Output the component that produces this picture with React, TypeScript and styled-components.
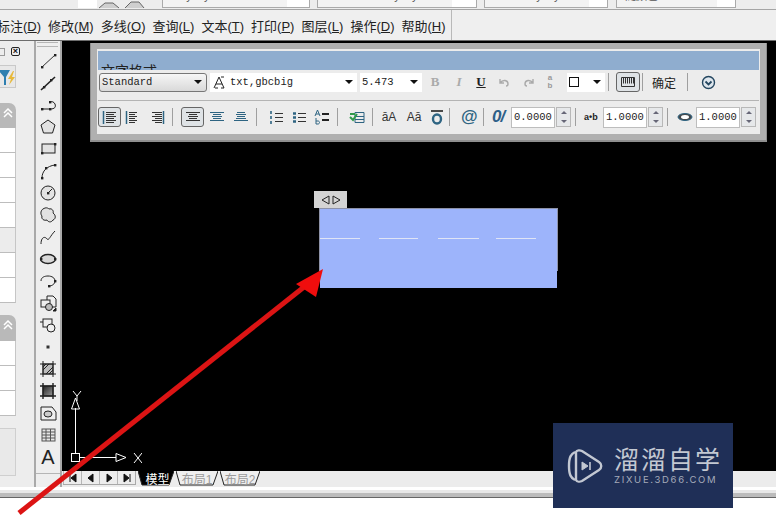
import React from "react";
import styled, { createGlobalStyle } from "styled-components";

const GlobalStyle = createGlobalStyle`
  html, body {
    margin: 0;
    padding: 0;
    background: #fff;
  }
  * {
    box-sizing: border-box;
  }
`;

const Root = styled.div`
  position: relative;
  width: 776px;
  height: 522px;
  overflow: hidden;
  display: flex;
  flex-direction: column;
  background: #fff;
  font-family: "Liberation Sans", "Noto Sans CJK SC", sans-serif;
`;

// top strip, only the bottom of the combos is visible
const TopStrip = styled.div`
  height: 10px;
  flex: none;
  display: flex;
  align-items: flex-start;
  background: #ededed;
  border-bottom: 1px solid #a5a5a5;
`;

const TopBlank = styled.div`
  width: 19px;
  height: 8px;
  flex: none;
  margin-left: 78px;
  background: #fff;
`;

const TopCombo = styled.div<{ $w: number; $ml: number; $pl: number }>`
  width: ${(p) => p.$w}px;
  height: 8px;
  margin-left: ${(p) => p.$ml}px;
  padding-left: ${(p) => p.$pl}px;
  padding-bottom: 5px;
  display: flex;
  align-items: flex-end;
  overflow: hidden;
  background: linear-gradient(90deg, #f3f3f3 85%, #fff 85%);
  border: 1px solid #aaa;
  border-top: none;
  font-size: 11px;
  line-height: 12px;
  color: #555;
`;

const IsoIcons = styled.svg`
  flex: none;
`;

const MenuBar = styled.div`
  height: 31px;
  flex: none;
  display: flex;
  align-items: center;
  background: #efefef;
  border-bottom: 1px solid #6d6d6d;
`;

const MenuList = styled.div`
  width: 452px;
  height: 100%;
  display: flex;
  align-items: center;
  gap: 7px;
  border-right: 1px solid #b9b9b9;
  overflow: hidden;
`;

const MenuItem = styled.span`
  flex: none;
  font-size: 13px;
  color: #222;
  white-space: nowrap;
  &:first-child {
    margin-left: -3px;
  }
  u {
    text-underline-offset: 1px;
  }
`;

const Main = styled.div`
  height: 446px;
  flex: none;
  display: flex;
`;

const Palette = styled.div`
  width: 36px;
  flex: none;
  padding-top: 6px;
  background: #ededed;
  border-right: 2px solid #a9a9a9;
`;

const CloseRow = styled.div`
  width: 20px;
  height: 10px;
  display: flex;
  justify-content: space-between;
`;

const MinimizeBox = styled.div`
  width: 5px;
  height: 8px;
  margin-top: 1px;
  border: 1px solid #9a9a9a;
  border-left: none;
`;

const CloseBox = styled.div`
  width: 9px;
  height: 9px;
  display: flex;
  align-items: center;
  justify-content: center;
  border: 1px solid #222;
  border-radius: 2px;
  font-size: 9px;
  font-weight: 700;
  line-height: 7px;
  color: #111;
`;

const FilterBox = styled.div`
  width: 16px;
  height: 23px;
  margin-top: 8px;
  overflow: hidden;
  display: flex;
  align-items: center;
  justify-content: flex-end;
  border: 1px solid #c9c9c9;
  border-left: none;
  background: #e8e8e8;
`;

const PanelHeader = styled.div<{ $mt: number; $h: number }>`
  width: 16px;
  height: ${(p) => p.$h}px;
  margin-top: ${(p) => p.$mt}px;
  display: flex;
  align-items: flex-start;
  justify-content: center;
  padding-top: 5px;
  background: #b9b9b9;
  border-top-right-radius: 7px;
`;

const PanelRow = styled.div<{ $gray?: boolean; $h?: number }>`
  width: 16px;
  height: ${(p) => p.$h ?? 25}px;
  background: ${(p) => (p.$gray ? "#ececec" : "#fff")};
  border-bottom: 1px solid #bdbdbd;
  border-right: 1px solid #c6c6c6;
`;

const PanelBox = styled.div`
  width: 16px;
  height: 48px;
  margin-top: 12px;
  background: #e9e9e9;
  border: 1px solid #cfcfcf;
  border-left: none;
`;

const DrawBar = styled.div`
  width: 26px;
  flex: none;
  display: flex;
  flex-direction: column;
  background: #eeeeee;
  border-right: 2px solid #a9a9a9;
`;

const Grip = styled.div`
  flex: none;
  margin: 1px 2px 3px 1px;
  border-top: 1px solid #b5b5b5;
  border-bottom: 1px solid #b5b5b5;
  height: 5px;
`;

const DrawCell = styled.div`
  height: 22px;
  flex: none;
  display: flex;
  align-items: center;
  justify-content: center;
  font-size: 20px;
  color: #222;
`;

const DrawBarEnd = styled.div`
  margin-top: 5px;
  border-top: 1px solid #b5b5b5;
`;

const Workspace = styled.div`
  flex: 1;
  display: flex;
  flex-direction: column;
  min-width: 0;
`;

const Canvas = styled.div`
  position: relative;
  flex: 1;
  background: #000;
`;

const TabBar = styled.div`
  height: 16px;
  flex: none;
  display: flex;
  align-items: flex-start;
  background: #ececec;
`;

const NavGroup = styled.div`
  display: flex;
  width: 73px;
  height: 14px;
  margin-left: 1px;
  border: 1px solid #a8a8a8;
  border-left: none;
  border-top: none;
`;

const NavButton = styled.div`
  flex: 1;
  display: flex;
  align-items: center;
  justify-content: center;
  border-left: 1px solid #b5b5b5;
`;

const Tab = styled.div<{ $w: number; $active?: boolean }>`
  position: relative;
  width: ${(p) => p.$w}px;
  height: 15px;
  flex: none;
  margin-left: 2px;
  padding-left: ${(p) => (p.$active ? 3 : 0)}px;
  display: flex;
  align-items: center;
  justify-content: center;
  font-size: 12px;
  color: ${(p) => (p.$active ? "#fff" : "#9a9a9a")};
  span {
    position: relative;
  }
  svg {
    position: absolute;
    inset: 0;
  }
`;

const Footer = styled.div`
  flex: 1;
  padding-top: 3px;
  background: #fff;
`;

const FooterBand = styled.div`
  height: 8px;
  background: linear-gradient(#e8e8e8 0 50%, #bcbcbc 50% 100%);
  border-bottom: 1px solid #666;
`;

// floating text format window
const FormatWindow = styled.div`
  position: absolute;
  left: 28px;
  top: 2px;
  width: 677px;
  height: 99px;
  padding: 8px 7px 0;
  background: #ececec;
  border: 1px solid #8f8f8f;
  border-width: 0 1px 2px 1px;
  box-shadow: inset 0 0 0 6px #b0b0b0;
`;

const TitleBar = styled.div`
  height: 19px;
  overflow: hidden;
  padding: 12px 0 0 3px;
  background: #8fadcf;
  font-size: 14px;
  line-height: 16px;
  color: #222;
`;

const FormatRow = styled.div<{ $h: number; $mt: number }>`
  display: flex;
  align-items: center;
  height: ${(p) => p.$h}px;
  margin-top: ${(p) => p.$mt}px;
`;

const RowRule = styled.div`
  height: 1px;
  margin-top: 8px;
  background: #b4b4b4;
`;

const Select = styled.div<{ $w: number; $ml: number; $gray?: boolean }>`
  width: ${(p) => p.$w}px;
  height: 19px;
  flex: none;
  margin-left: ${(p) => p.$ml}px;
  padding: 0 4px 0 2px;
  display: flex;
  align-items: center;
  justify-content: space-between;
  background: ${(p) => (p.$gray ? "linear-gradient(#f6f6f6, #d9d9d9)" : "#fff")};
  border: ${(p) => (p.$gray ? "1px solid #777" : "none")};
  border-radius: ${(p) => (p.$gray ? "3px" : "0")};
  font-family: "Liberation Mono", monospace;
  font-size: 10.5px;
  color: #222;
`;

const FontLabel = styled.span`
  display: flex;
  align-items: center;
  gap: 4px;
`;

const DownArrow = styled.i`
  width: 0;
  height: 0;
  flex: none;
  border-left: 4px solid transparent;
  border-right: 4px solid transparent;
  border-top: 4px solid #111;
`;

const StyleGlyph = styled.span<{ $ml: number; $w: number; $color: string; $serif?: boolean; $size?: number }>`
  width: ${(p) => p.$w}px;
  flex: none;
  margin-left: ${(p) => p.$ml}px;
  text-align: center;
  font-family: ${(p) => (p.$serif ? '"Liberation Serif", serif' : '"Liberation Sans", sans-serif')};
  font-size: ${(p) => p.$size ?? 13}px;
  line-height: ${(p) => (p.$size ? p.$size + "px" : "normal")};
  font-weight: 700;
  color: ${(p) => p.$color};
`;

const IconSlot = styled.span<{ $ml: number; $w: number }>`
  width: ${(p) => p.$w}px;
  height: 20px;
  flex: none;
  margin-left: ${(p) => p.$ml}px;
  display: flex;
  align-items: center;
  justify-content: center;
`;

const PressedButton = styled.span<{ $ml: number; $w: number }>`
  width: ${(p) => p.$w}px;
  height: 20px;
  flex: none;
  margin-left: ${(p) => p.$ml}px;
  display: flex;
  align-items: center;
  justify-content: center;
  background: #dfe3e6;
  border: 1px solid #666;
  border-radius: 3px;
`;

const Sep = styled.i<{ $ml: number }>`
  width: 1px;
  height: 18px;
  flex: none;
  margin-left: ${(p) => p.$ml}px;
  background: #9f9f9f;
`;

const OkLabel = styled.span`
  width: 24px;
  flex: none;
  margin-left: 9px;
  font-size: 12px;
  color: #222;
  white-space: nowrap;
`;

const AtSign = styled.span`
  width: 16px;
  flex: none;
  margin-left: 11px;
  font-size: 17px;
  font-weight: 700;
  text-align: center;
  color: #2e6482;
`;

const SmallCaps = styled.span<{ $ml: number }>`
  width: 16px;
  flex: none;
  margin-left: ${(p) => p.$ml}px;
  font-size: 12px;
  text-align: center;
  color: #333;
`;

const TrackLabel = styled.span`
  width: 17px;
  flex: none;
  margin-left: 8px;
  font-size: 9px;
  font-weight: 700;
  white-space: nowrap;
  color: #222;
`;

const ObliqueLabel = styled.span`
  width: 18px;
  flex: none;
  margin-left: 8px;
  font-size: 17px;
  font-weight: 700;
  font-style: italic;
  letter-spacing: -1px;
  white-space: nowrap;
  color: #2e5f88;
`;

const NumberInput = styled.div<{ $ml: number }>`
  width: 44px;
  height: 21px;
  flex: none;
  margin-left: ${(p) => p.$ml}px;
  padding-left: 2px;
  display: flex;
  align-items: center;
  background: #fff;
  border: 1px solid #bdbdbd;
  font-family: "Liberation Mono", monospace;
  font-size: 10.5px;
  color: #222;
`;

const Spinner = styled.div`
  width: 15px;
  height: 20px;
  flex: none;
  margin-left: 1px;
  display: flex;
  flex-direction: column;
  border: 1px solid #b8b8b8;
  background: #e6e8ea;
`;

const SpinPart = styled.div<{ $down?: boolean }>`
  flex: 1;
  display: flex;
  align-items: center;
  justify-content: center;
  &::after {
    content: "";
    border-left: 3px solid transparent;
    border-right: 3px solid transparent;
    ${(p) => (p.$down ? "border-top: 3px solid #667;" : "border-bottom: 3px solid #667;")}
  }
`;

// in-place text editor on the drawing
const RulerTab = styled.div`
  position: absolute;
  left: 252px;
  top: 150px;
  width: 33px;
  height: 17px;
  display: flex;
  align-items: center;
  justify-content: center;
  background: #d4d4d4;
`;

const TextFrame = styled.div`
  position: absolute;
  left: 257px;
  top: 167px;
  width: 239px;
  height: 63px;
  border: 1px solid #8d92a8;
  border-bottom: none;
`;

const TextFill = styled.div`
  position: absolute;
  left: 258px;
  top: 168px;
  width: 237px;
  height: 79px;
  display: flex;
  align-items: flex-start;
  padding-top: 29px;
  background: #9db4fb;
`;

const DashLine = styled.i<{ $w: number; $ml: number }>`
  width: ${(p) => p.$w}px;
  height: 1px;
  flex: none;
  margin-left: ${(p) => p.$ml}px;
  background: #dfe4f5;
`;

const UcsIcon = styled.svg`
  position: absolute;
  left: 4px;
  top: 345px;
`;

const Arrow = styled.svg`
  position: absolute;
  left: 0;
  top: 0;
`;

const Watermark = styled.div`
  position: absolute;
  left: 553px;
  top: 423px;
  width: 180px;
  height: 85px;
  display: flex;
  align-items: center;
  padding: 0 0 0 14px;
  background: #1f2f57;
`;

const WatermarkText = styled.div`
  margin-left: 11px;
  display: flex;
  flex-direction: column;
  color: #c3c8d2;
`;

const WatermarkTitle = styled.div`
  font-size: 25px;
  line-height: 27px;
  letter-spacing: 2px;
  white-space: nowrap;
`;

const WatermarkUrl = styled.div`
  font-family: "Inter", sans-serif;
  font-size: 9.5px;
  line-height: 11px;
  letter-spacing: 1.7px;
  white-space: nowrap;
  color: #a5abba;
`;

const Stroke: React.FC<React.SVGProps<SVGSVGElement> & { s?: number; vw?: number }> = ({
  s = 18,
  vw,
  children,
  ...rest
}) => (
  <svg
    width={vw ?? s}
    height={s}
    viewBox={`0 0 ${vw ?? s} ${s}`}
    fill="none"
    stroke="#222"
    strokeWidth={1}
    {...rest}
  >
    {children}
  </svg>
);

const dot = (x: number, y: number) => <rect x={x - 1} y={y - 1} width={2.4} height={2.4} fill="#222" stroke="none" />;

const drawIcons: React.ReactNode[] = [
  <Stroke key="line"><path d="M3 15 16 3" stroke="#333" />{dot(3, 15)}{dot(16, 3)}</Stroke>,
  <Stroke key="xline"><path d="M2 16 16 3" strokeWidth={1.6} />{dot(5, 13)}{dot(12, 6)}</Stroke>,
  <Stroke key="pline"><path d="M3 13h8c5 0 6-2 5-5-1-2-3-3-5-2" />{dot(3, 13)}{dot(11, 13)}{dot(11, 6)}</Stroke>,
  <Stroke key="polygon"><path d="M9 2 16 7 13.5 15H4.5L2 7Z" fill="#e2e2e2" /></Stroke>,
  <Stroke key="rect"><rect x="3" y="4" width="13" height="9" fill="#e2e2e2" />{dot(3, 13)}{dot(16, 4)}</Stroke>,
  <Stroke key="arc"><path d="M3 16C3 9 8 4 16 3" />{dot(3, 16)}{dot(7, 6)}{dot(16, 3)}</Stroke>,
  <Stroke key="circle"><circle cx="9" cy="9" r="7" fill="#e2e2e2" /><path d="M9 9 13 5" />{dot(9, 9)}</Stroke>,
  <Stroke key="cloud"><path d="M4 3C7 1 9 2 10 3 13 2 15 5 14 7 17 9 17 13 14 14 12 17 9 16 8 14 5 15 2 13 3 10 1 8 2 4 4 3Z" fill="#e2e2e2" /></Stroke>,
  <Stroke key="spline"><path d="M2 16C2 9 6 8 8 11 10 13 11 8 16 3" /></Stroke>,
  <Stroke key="ellipse"><ellipse cx="9" cy="9" rx="7.5" ry="4.5" fill="#d8d8d8" strokeWidth={1.4} />{dot(2, 9)}{dot(16, 9)}</Stroke>,
  <Stroke key="earc"><path d="M2 9C2 5 6 4 9 4 13 4 16 6 16 9 16 12 13 14 10 14" />{dot(16, 9)}{dot(10, 14)}</Stroke>,
  <Stroke key="insert"><path d="M8 2h6l3 3v8H8Z" fill="#eee" /><rect x="2" y="6" width="9" height="7" fill="#eee" /><circle cx="10" cy="13" r="3.5" fill="#bbb" /><path d="M14 17 17 14V17Z" fill="#111" /></Stroke>,
  <Stroke key="block"><rect x="4" y="3" width="9" height="8" fill="#eee" /><circle cx="12" cy="12" r="4" fill="#eee" /><path d="M1 6h3" /></Stroke>,
  <Stroke key="point"><rect x="7.5" y="7.5" width="3" height="3" fill="#333" stroke="none" /></Stroke>,
  <Stroke key="hatch"><rect x="4" y="4" width="10" height="10" fill="#bbb" /><path d="M1 4h16M1 14h16M4 1v16M14 1v16M4 10l6-6M7 14l7-7M4 7l3-3M10 14l4-4" /></Stroke>,
  <Stroke key="gradient"><defs><linearGradient id="grad" x1="0" y1="0" x2="1" y2="1"><stop offset="0" stopColor="#222" /><stop offset="1" stopColor="#999" /></linearGradient></defs><rect x="4" y="4" width="10" height="10" fill="url(#grad)" /><path d="M1 4h16M1 14h16M4 1v16M14 1v16" strokeWidth={1.4} /></Stroke>,
  <Stroke key="region"><path d="M2 3h11l4 5v8H2Z" fill="#eee" /><ellipse cx="9" cy="10" rx="4" ry="3" fill="#ccc" /></Stroke>,
  <Stroke key="table" stroke="#555"><rect x="3" y="3" width="13" height="12" fill="#e6e6e6" /><path d="M3 6h13M3 9h13M3 12h13M7 3v12M11.5 3v12" /></Stroke>,
];

const Align: React.FC<{ widths: number[]; rails?: boolean; right?: boolean; color?: string }> = ({
  widths,
  rails,
  right,
  color = "#333",
}) => (
  <Stroke s={16} stroke={color}>
    {rails && <path d="M1.5 2v13" stroke="#2e6482" strokeWidth={1.5} />}
    {right && <path d="M14.5 2v13" stroke="#2e6482" strokeWidth={1.5} />}
    {widths.map((w, i) => (
      <path key={i} d={`M${rails ? 4 : right ? 13 - w : Math.round((16 - w) / 2)} ${3.5 + i * 2}h${w}`} />
    ))}
  </Stroke>
);

const menus: [string, string][] = [
  ["标注", "D"],
  ["修改", "M"],
  ["多线", "O"],
  ["查询", "L"],
  ["文本", "T"],
  ["打印", "P"],
  ["图层", "L"],
  ["操作", "D"],
  ["帮助", "H"],
];

const palettePanelOne = [false, false, false, false, true, false, false];
const palettePanelTwo = [false, false, false];

const NumberField: React.FC<{ value: string; ml: number }> = ({ value, ml }) => (
  <>
    <NumberInput $ml={ml}>{value}</NumberInput>
    <Spinner>
      <SpinPart />
      <SpinPart $down />
    </Spinner>
  </>
);

export default function App() {
  return (
    <Root>
      <GlobalStyle />
      <TopStrip>
        <TopBlank />
        <IsoIcons width={48} height={9} viewBox="0 0 48 9" fill="none" stroke="#666">
          <path d="M2 8 8 3h8l6 5M28 8l6-6h8l5 6" fill="#cfcfcf" />
        </IsoIcons>
        <TopCombo $w={148} $ml={17} $pl={16}>ByLayer</TopCombo>
        <TopCombo $w={160} $ml={7} $pl={69}>ByLayer</TopCombo>
        <TopCombo $w={124} $ml={7} $pl={44}>ByLayer</TopCombo>
        <TopCombo $w={120} $ml={8} $pl={8}>随颜色</TopCombo>
      </TopStrip>

      <MenuBar>
        <MenuList>
          {menus.map(([label, key]) => (
            <MenuItem key={label + key}>
              {label}(<u>{key}</u>)
            </MenuItem>
          ))}
        </MenuList>
      </MenuBar>

      <Main>
        <Palette>
          <CloseRow>
            <MinimizeBox />
            <CloseBox>×</CloseBox>
          </CloseRow>
          <FilterBox>
            <Stroke s={18} vw={15} stroke="none">
              <path d="M-2 2h12L6 9v8H4V9Z" fill="#2e7fb0" />
              <path d="M13 3 8 11h3l-2 6 6-8h-3l2-6Z" fill="#e8b93a" />
            </Stroke>
          </FilterBox>
          <PanelHeader $mt={15} $h={25}>
            <Stroke s={10} vw={12} stroke="#fff" strokeWidth={1.5}>
              <path d="M2 5 6 1l4 4M2 9l4-4 4 4" />
            </Stroke>
          </PanelHeader>
          {palettePanelOne.map((gray, i) => (
            <PanelRow key={i} $gray={gray} />
          ))}
          <PanelHeader $mt={12} $h={26}>
            <Stroke s={10} vw={12} stroke="#fff" strokeWidth={1.5}>
              <path d="M2 5 6 1l4 4M2 9l4-4 4 4" />
            </Stroke>
          </PanelHeader>
          {palettePanelTwo.map((gray, i) => (
            <PanelRow key={i} $gray={gray} />
          ))}
          <PanelBox />
        </Palette>

        <DrawBar>
          <Grip />
          {drawIcons.map((icon, i) => (
            <DrawCell key={i}>{icon}</DrawCell>
          ))}
          <DrawCell>A</DrawCell>
          <DrawBarEnd />
        </DrawBar>

        <Workspace>
          <Canvas>
            <FormatWindow>
              <TitleBar>文字格式</TitleBar>
              <FormatRow $h={20} $mt={2}>
                <Select $w={108} $ml={1} $gray>
                  Standard
                  <DownArrow />
                </Select>
                <Select $w={147} $ml={3}>
                  <FontLabel>
                    <Stroke s={14} stroke="#222">
                      <path d="M2 13 7 2l5 11M4 9h6M9 2h3M3 13h3M9 13h3" />
                    </Stroke>
                    txt,gbcbig
                  </FontLabel>
                  <DownArrow />
                </Select>
                <Select $w={62} $ml={3}>
                  5.473
                  <DownArrow />
                </Select>
                <StyleGlyph $ml={6} $w={14} $color="#aaa" $serif>B</StyleGlyph>
                <StyleGlyph $ml={10} $w={14} $color="#aaa" $serif>
                  <i>I</i>
                </StyleGlyph>
                <StyleGlyph $ml={8} $w={14} $color="#222" $serif>
                  <u>U</u>
                </StyleGlyph>
                <IconSlot $ml={7} $w={18}>
                  <Stroke s={12} stroke="#aaa" strokeWidth={1.4}>
                    <path d="M2 3v4h4M2 7c3-4 8-3 8 1 0 1-1 2-2 2" />
                  </Stroke>
                </IconSlot>
                <IconSlot $ml={7} $w={18}>
                  <Stroke s={12} stroke="#aaa" strokeWidth={1.4}>
                    <path d="M10 3v4H6M10 7C7 3 2 4 2 8c0 1 1 2 2 2" />
                  </Stroke>
                </IconSlot>
                <StyleGlyph $ml={5} $w={14} $color="#999" $size={8}>
                  a
                  <br />b
                </StyleGlyph>
                <Select $w={38} $ml={10}>
                  <Stroke s={10} stroke="#111">
                    <rect x="0.5" y="0.5" width="9" height="9" />
                  </Stroke>
                  <DownArrow />
                </Select>
                <Sep $ml={3} />
                <PressedButton $ml={7} $w={24}>
                  <Stroke s={12} vw={16} stroke="#333">
                    <path d="M1.5 1.5h13v9h-13ZM3.5 1.5v6M5.5 1.5v6M7.5 1.5v6M9.5 1.5v6M11.5 1.5v6M13.5 1.5v6" />
                  </Stroke>
                </PressedButton>
                <Sep $ml={2} />
                <OkLabel>确定</OkLabel>
                <Sep $ml={11} />
                <IconSlot $ml={13} $w={15}>
                  <Stroke s={15} stroke="#24465f" strokeWidth={1.4}>
                    <circle cx="7.5" cy="7.5" r="6" fill="#dfe7ee" />
                    <path d="M4.5 6.5 7.5 9.5l3-3" strokeWidth={1.8} />
                  </Stroke>
                </IconSlot>
              </FormatRow>
              <RowRule />
              <FormatRow $h={22} $mt={5}>
                <PressedButton $ml={0} $w={23}>
                  <Align widths={[10, 8, 10, 8, 10, 8]} rails />
                </PressedButton>
                <IconSlot $ml={3} $w={18}>
                  <Align widths={[8, 6, 8, 6, 8, 6]} rails />
                </IconSlot>
                <IconSlot $ml={6} $w={18}>
                  <Align widths={[10, 7, 10, 7, 10, 7]} right />
                </IconSlot>
                <Sep $ml={6} />
                <PressedButton $ml={8} $w={23}>
                  <Align widths={[14, 8, 10, 8, 14]} />
                </PressedButton>
                <IconSlot $ml={4} $w={17}>
                  <Align widths={[14, 8, 10, 8, 14]} color="#2e6482" />
                </IconSlot>
                <IconSlot $ml={7} $w={17}>
                  <Align widths={[8, 10, 8, 10, 14]} color="#2e6482" />
                </IconSlot>
                <Sep $ml={7} />
                <IconSlot $ml={11} $w={16}>
                  <Stroke s={16} stroke="#333">
                    <path d="M7 4.5h8M7 8.5h8M7 12.5h8" />
                    <path d="M3 2v3M3 7v3M3 12v3" stroke="#2e6482" strokeWidth={1.6} />
                  </Stroke>
                </IconSlot>
                <IconSlot $ml={7} $w={16}>
                  <Stroke s={16} stroke="#333">
                    <path d="M7 4.5h8M7 8.5h8M7 12.5h8" />
                    <path d="M2 4.5h3M2 8.5h3M2 12.5h3" stroke="#2e6482" strokeWidth={2.4} />
                  </Stroke>
                </IconSlot>
                <IconSlot $ml={6} $w={18}>
                  <Stroke s={16} stroke="#222">
                    <path d="M8 5h7M8 11h7" strokeWidth={2} />
                    <path d="M1 7 3.5 1 6 7M2 5h3M2 9v6h2c2 0 2-3 0-3H2" stroke="#2e6482" />
                  </Stroke>
                </IconSlot>
                <Sep $ml={6} />
                <IconSlot $ml={10} $w={18}>
                  <Stroke s={16} stroke="#2e6482">
                    <path d="M6 3.5h9v10H6ZM6 7.5h9M6 10.5h9" />
                    <path d="M1 8l3 3 4-6M1 5h5" stroke="#2f9a4a" strokeWidth={2} />
                  </Stroke>
                </IconSlot>
                <Sep $ml={6} />
                <SmallCaps $ml={8}>āA</SmallCaps>
                <SmallCaps $ml={9}>Aā</SmallCaps>
                <IconSlot $ml={7} $w={16}>
                  <Stroke s={16} stroke="#2e6482">
                    <path d="M2 2h12" strokeWidth={1.6} stroke="#222" />
                    <ellipse cx="8" cy="10" rx="4" ry="4.5" strokeWidth={2.4} />
                  </Stroke>
                </IconSlot>
                <Sep $ml={4} />
                <AtSign>@</AtSign>
                <Sep $ml={6} />
                <ObliqueLabel>0/</ObliqueLabel>
                <NumberField value="0.0000" ml={1} />
                <Sep $ml={4} />
                <TrackLabel>a•b</TrackLabel>
                <NumberField value="1.0000" ml={2} />
                <Sep $ml={4} />
                <IconSlot $ml={9} $w={16}>
                  <Stroke s={12} vw={16}>
                    <ellipse cx="8" cy="6" rx="7" ry="3.5" fill="#44484c" stroke="#2e6482" />
                    <ellipse cx="8" cy="6" rx="4" ry="2" fill="#fff" stroke="none" />
                  </Stroke>
                </IconSlot>
                <NumberField value="1.0000" ml={3} />
              </FormatRow>
            </FormatWindow>

            <RulerTab>
              <Stroke s={12} vw={24} stroke="#222">
                <path d="M10 2 3 6l7 4ZM14 2l7 4-7 4Z" />
              </Stroke>
            </RulerTab>
            <TextFill>
              <DashLine $w={40} $ml={0} />
              <DashLine $w={39} $ml={19} />
              <DashLine $w={41} $ml={20} />
              <DashLine $w={40} $ml={17} />
            </TextFill>
            <TextFrame />

            <UcsIcon width={76} height={80} viewBox="0 0 76 80" fill="none" stroke="#fff">
              <rect x="5.5" y="67.5" width="8" height="8" />
              <path d="M9.5 67.5V22M13.5 71.5H50" />
              <path d="M9.5 12 13.5 23H5.5ZM60 71.5 50 67.5v8Z" />
              <path d="M7 5 11 10 15 5M11 10v5" />
              <path d="M68 67 76 77M76 67 68 77" />
            </UcsIcon>
          </Canvas>
          <TabBar>
            <NavGroup>
              <NavButton>
                <Stroke s={10} stroke="#111" fill="#111"><path d="M2 1v8M8 1 3 5l5 4Z" /></Stroke>
              </NavButton>
              <NavButton>
                <Stroke s={10} stroke="#111" fill="#111"><path d="M7 1 2 5l5 4Z" /></Stroke>
              </NavButton>
              <NavButton>
                <Stroke s={10} stroke="#111" fill="#111"><path d="M3 1l5 4-5 4Z" /></Stroke>
              </NavButton>
              <NavButton>
                <Stroke s={10} stroke="#111" fill="#111"><path d="M8 1v8M2 1l5 4-5 4Z" /></Stroke>
              </NavButton>
            </NavGroup>
            <Tab $w={36} $active>
              <Stroke s={15} vw={36} fill="#000" stroke="#222"><path d="M0 0 4 14H31L36 0" /></Stroke>
              <span>模型</span>
            </Tab>
            <Tab $w={42}>
              <Stroke s={15} vw={42} fill="#efefef" stroke="#222"><path d="M0 0 4 14H37L42 0" /></Stroke>
              <span>布局1</span>
            </Tab>
            <Tab $w={40}>
              <Stroke s={15} vw={40} fill="#efefef" stroke="#222"><path d="M0 0 4 14H35L40 0" /></Stroke>
              <span>布局2</span>
            </Tab>
          </TabBar>
        </Workspace>
      </Main>

      <Footer>
        <FooterBand />
      </Footer>

      <Arrow width={776} height={522} viewBox="0 0 776 522">
        <path d="M19 513 304 287" stroke="#dc1414" strokeWidth={5} />
        <path d="M323 269 296 284 316 297Z" fill="#f00d0d" />
      </Arrow>

      <Watermark>
        <svg width={36} height={36} viewBox="0 0 36 36" fill="none" stroke="#c3c8d2" strokeWidth={2.4}>
          <path d="M8 4C4 6 2 9 2 18s2 12 6 14" />
          <path d="M9 4c1-2 4-2 6-1l17 11c3 2 3 6 0 8L15 33c-2 1-5 1-6-1Z" />
          <path d="M15 14v8l6-4Z" fill="#c3c8d2" strokeWidth={1} />
          <path d="M23 14v8" strokeWidth={1.6} />
        </svg>
        <WatermarkText>
          <WatermarkTitle>溜溜自学</WatermarkTitle>
          <WatermarkUrl>ZIXUE.3D66.COM</WatermarkUrl>
        </WatermarkText>
      </Watermark>
    </Root>
  );
}
